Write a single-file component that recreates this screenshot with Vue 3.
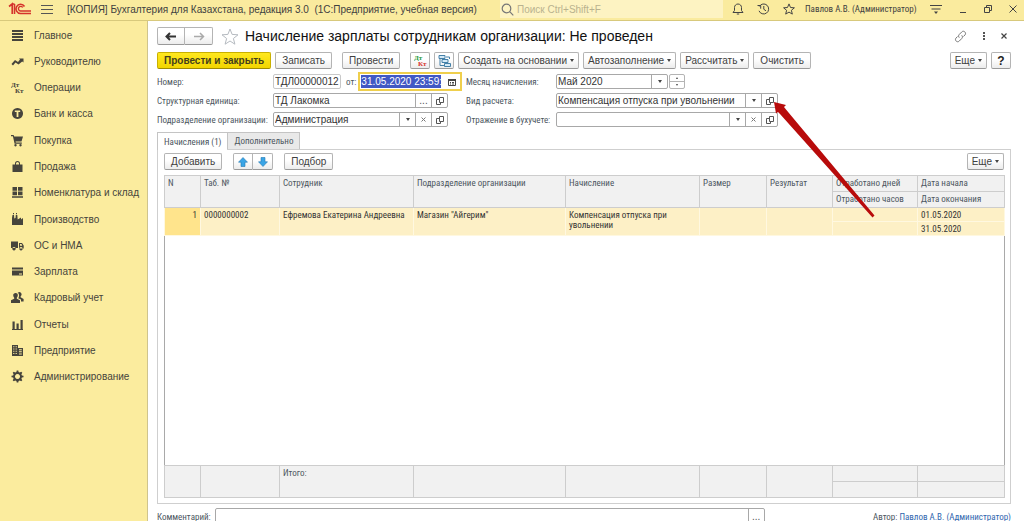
<script setup>
import { ref } from 'vue'

const sections = [
  { name: 'Главное', d: 'M1 1h11v2H1zM1 4h11v2H1zM1 7h11v2H1zM1 10h11v2H1z' },
  { name: 'Руководителю', d: 'M.5 9 4 5l3 2 2-2.500-1-1H12.500v4l-1.300-1L7.500 9.500l-3-2L2 10.500z' },
  { name: 'Операции', dtkt: true },
  { name: 'Банк и касса', d: 'M6.500 1a5.500 5.500 0 1 0 .01 0zM3.800 3.500h5.400v1.600H7.400V10H5.600V5.100H3.800z' },
  { name: 'Покупка', d: 'M0 1h2.600l.6 1.500H12L10.500 7.500H4.600l.2 1h6v1.300H3.600L1.900 2.300H0zM4.500 10a1.200 1.200 0 1 0 .01 0zM9.500 10a1.200 1.200 0 1 0 .01 0z' },
  { name: 'Продажа', d: 'M1.500 4.500H4V3.500a2.500 2.500 0 0 1 5 0V4.500h2.500v7.500h-10zM5 4.500h3V3.500a1.500 1.500 0 0 0-3 0z' },
  { name: 'Номенклатура и склад', d: 'M1.500 1h4.500v3.700H1.500zM7 1h4.500v3.700H7zM1.500 5.500h4.500v3.700H1.500zM7 5.500h4.500v3.700H7zM1 10.200h11v1.600H1z' },
  { name: 'Производство', d: 'M1 12V5l.5-3H3l.3 3.500L4.500 5l.3-3h1.500l.4 4.500L10 4.500v2L12 5v7zM2 0h1v1.300H2zM5 0h1v1.300H5z' },
  { name: 'ОС и НМА', d: 'M0 2.500h7v6.500H0zM8 4h3l1.700 2.500V9.500H8zM9 5v1.800h2.300L10.500 5zM3 8a1.700 1.700 0 1 0 .01 0zM10 8a1.700 1.700 0 1 0 .01 0z' },
  { name: 'Зарплата', d: 'M1 2.500h11v2H1zM1 5.500h11v5H1zM8 8.500v1h3v-1z' },
  { name: 'Кадровый учет', d: 'M4.500 2a2 2 0 0 1 2.300 2.200c0 1.300-.5 2-1 2.500v1L9 9.200V12H0V9.200l3.200-1.500v-1C2.500 6 2.200 5.200 2.200 4.200 2.200 3 3.200 2 4.500 2zM8.200 1c1.400 0 2.400 1 2.400 2.300 0 1-.5 1.800-1 2.200v.8l3 1.700V10.500H10V8.600L7.200 7.200c.8-1 1-2.200.8-3.500-.1-.9-.6-1.500-1.300-2z' },
  { name: 'Отчеты', d: 'M1.500 3.500h2.200V11H1.500zM5.500 5.500h2.200V11H5.500zM9.500 2h2.200v9H9.500zM1 11h11v1H1z' },
  { name: 'Предприятие', d: 'M1 1h6v3h5v8H1zM2.200 2.300v1h1.200v-1zM4.600 2.300v1h1.200v-1zM2.200 4.500v1h1.200v-1zM4.600 4.500v1h1.200v-1zM2.200 6.700v1h1.200v-1zM4.600 6.700v1h1.200v-1zM2.200 8.900v1h1.200v-1zM4.600 8.900v1h1.200v-1zM8 5.200v1h2.800v-1zM8 7.300v1h2.800v-1zM8 9.400v1h2.800v-1z' },
  { name: 'Администрирование', d: 'M5.700.5h1.600l.3 1.600 1.200.5 1.400-.9 1.100 1.100-.9 1.400.5 1.200 1.600.3v1.600l-1.600.3-.5 1.200.9 1.400-1.100 1.100-1.400-.9-1.200.5-.3 1.600H5.700l-.3-1.600-1.200-.5-1.400.9-1.100-1.100.9-1.400-.5-1.200L.5 7.300V5.700l1.600-.3.5-1.200-.9-1.400 1.100-1.100 1.400.9 1.200-.5zM6.500 4a2.500 2.500 0 1 0 .01 0z' },
]

const number = ref('ТДЛ00000012')
const date = ref('31.05.2020 23:59:59')
const month = ref('Май 2020')
const unit = ref('ТД Лакомка')
const department = ref('Администрация')
const kind = ref('Компенсация отпуска при увольнении')
const reflection = ref('')
const comment = ref('')
const search = ref('')

const widths = [36, 79, 134, 152, 134, 67, 66, 85, 87]
const titles = ['N', 'Таб. №', 'Сотрудник', 'Подразделение организации', 'Начисление', 'Размер', 'Результат']
const rows = [
  {
    n: 1,
    cells: ['0000000002', 'Ефремова Екатерина Андреевна', 'Магазин "Айгерим"', 'Компенсация отпуска при увольнении', '', ''],
    start: '01.05.2020',
    end: '31.05.2020',
  },
]
</script>

<template>
  <div class="app">
    <header class="topbar">
      <svg class="logo" viewBox="0 0 24 14" width="24" height="14" fill="none" stroke="#d5332c">
        <path d="M1 4.500 4.200 2v10M6.500 2v10M4.200 2h2.300" stroke-width="1.600" />
        <path d="M16.500 4.500A4.600 4.600 0 1 0 12.500 11.500H23" stroke-width="1.600" />
        <path d="M14.700 5.500A2.300 2.300 0 1 0 12.500 9H23" stroke-width="1.400" />
      </svg>
      <button class="plain" aria-label="Меню">
        <svg viewBox="0 0 12 10" width="12" height="10" stroke="#555" stroke-width="1"><path d="M0 1.500h12M0 5.500h12M0 9.500h12" /></svg>
      </button>
      <span class="app-title">[КОПИЯ] Бухгалтерия для Казахстана, редакция 3.0&nbsp; (1С:Предприятие, учебная версия)</span>
      <label class="search">
        <svg viewBox="0 0 13 13" width="13" height="13" fill="none" stroke="#777" stroke-width="1.200"><circle cx="5.500" cy="5.500" r="4.300" /><path d="m8.700 8.700 3.600 3.600" /></svg>
        <input v-model="search" placeholder="Поиск Ctrl+Shift+F" aria-label="Поиск">
      </label>
      <div class="top-tools">
        <button class="plain" aria-label="Оповещения">
          <svg viewBox="0 0 12 12" width="12" height="12" fill="none" stroke="#444"><path d="M1 9.500h10L9.500 7.500V4.500C9.500 2.500 8 1 6 1S2.500 2.500 2.500 4.500v3zM4.800 11h2.400" /></svg>
        </button>
        <button class="plain" aria-label="История">
          <svg viewBox="0 0 13 12" width="13" height="12" fill="none" stroke="#444"><path d="M2.300 3.500A5 5 0 1 1 2 7.800M6.800 3v3.300L9 7.800" /><path d="M.5 2.500h3.200v3.200" /></svg>
        </button>
        <button class="plain" aria-label="Избранное">
          <svg viewBox="0 0 12 12" width="12" height="12" fill="none" stroke="#444"><path d="m6 .9 1.500 3.600 3.900.3-3 2.500.9 3.800L6 9.100l-3.300 2 .9-3.800-3-2.500 3.900-.3z" /></svg>
        </button>
      </div>
      <span class="user">Павлов А.В. (Администратор)</span>
      <div class="window-tools">
        <button class="plain" aria-label="Настройки">
          <svg viewBox="0 0 12 12" width="12" height="12"><path d="M0 2.500h12M1.500 6h9" stroke="#444" stroke-width="1.200" /><path d="M4 8.500h4L6 11z" fill="#444" /></svg>
        </button>
        <button class="plain" aria-label="Свернуть">
          <svg viewBox="0 0 8 8" width="8" height="8" stroke="#444"><path d="M1 7.500h6" /></svg>
        </button>
        <button class="plain" aria-label="Восстановить">
          <svg viewBox="0 0 8 8" width="8" height="8" fill="none" stroke="#444"><path d="M.5 2.500h5v5h-5zM2.500 2.500v-2h5v5h-2" /></svg>
        </button>
        <button class="plain" aria-label="Закрыть">
          <svg viewBox="0 0 8 8" width="8" height="8" stroke="#444"><path d="m.5.5 7 7M7.500.5l-7 7" /></svg>
        </button>
      </div>
    </header>

    <div class="body">
      <aside class="sidebar">
        <nav>
          <a v-for="s in sections" :key="s.name" href="#">
            <svg viewBox="0 0 13 13" width="13" height="13" fill="#46443c">
              <g v-if="s.dtkt" class="dtkt"><text x="0" y="6">Дт</text><text x="4" y="12">Кт</text></g>
              <path v-else :d="s.d" fill-rule="evenodd" />
            </svg>
            <span>{{ s.name }}</span>
          </a>
        </nav>
      </aside>

      <main class="page">
        <div class="heading">
          <div class="pair nav-pair">
            <button class="btn" aria-label="Назад">
              <svg viewBox="0 0 12 9" width="12" height="9" fill="none" stroke="#333" stroke-width="2"><path d="M1.500 4.500H11M5 1 1.500 4.500 5 8" /></svg>
            </button>
            <button class="btn" aria-label="Вперед">
              <svg viewBox="0 0 12 9" width="12" height="9" fill="none" stroke="#aaa" stroke-width="1.500"><path d="M10.500 4.500H1M7 1l3.500 3.500L7 8" /></svg>
            </button>
          </div>
          <button class="plain star" aria-label="В избранное">
            <svg viewBox="0 0 18 17" width="18" height="17" fill="none" stroke="#b5bac0"><path d="m9 1 2.100 5.400 5.900.4-4.600 3.700 1.500 5.700L9 13l-4.900 3.200 1.500-5.700L1 6.800l5.900-.4z" /></svg>
          </button>
          <h1>Начисление зарплаты сотрудникам организации: Не проведен</h1>
          <div class="form-tools">
            <button class="plain" aria-label="Ссылка">
              <svg viewBox="0 0 13 13" width="13" height="13" fill="none" stroke="#777"><path d="M5.300 7.700c-1-1-1-2.300 0-3.300l2.500-2.500c2-2 5 1 3.200 3L9.500 6.500M7.700 5.300c1 1 1 2.300 0 3.300l-2.500 2.500c-2 2-5-1-3.200-3L3.500 6.500" /></svg>
            </button>
            <button class="plain" aria-label="Действия">
              <svg viewBox="0 0 4 10" width="4" height="10" fill="#555"><path d="M1 1h2v2H1zM1 4h2v2H1zM1 7h2v2H1z" /></svg>
            </button>
            <button class="plain" aria-label="Закрыть форму">
              <svg viewBox="0 0 6 6" width="6" height="6" stroke="#444" stroke-width="1.200"><path d="m.5.5 5 5M5.500.5l-5 5" /></svg>
            </button>
          </div>
        </div>

        <div class="toolbar commands">
          <button class="btn primary">Провести и закрыть</button>
          <button class="btn">Записать</button>
          <button class="btn apart">Провести</button>
          <button class="btn icon apart" aria-label="Дт/Кт">
            <svg class="dtkt color" viewBox="0 0 13 13" width="13" height="13"><text x="0" y="6" fill="#1c9a3c">Дт</text><text x="4" y="12" fill="#d8322c">Кт</text></svg>
          </button>
          <button class="btn icon" aria-label="Структура подчиненности">
            <svg viewBox="0 0 13 12" width="13" height="12" fill="#d4e9f6" stroke="#4480a8"><path d="M1 .5h6v3H1zM4 4.500h6v3H4zM6.500 8.500h6v3h-6z" /><path d="M2 4v6.500h4M8 2h3.500v2" fill="none" /></svg>
          </button>
          <button class="btn menu">Создать на основании<i class="caret" /></button>
          <button class="btn menu">Автозаполнение<i class="caret" /></button>
          <button class="btn menu">Рассчитать<i class="caret" /></button>
          <button class="btn">Очистить</button>
          <button class="btn menu to-end">Еще<i class="caret" /></button>
          <button class="btn help">?</button>
        </div>

        <form class="fields" @submit.prevent>
          <label for="number">Номер:</label>
          <div class="line">
            <div class="box number"><input id="number" v-model="number"></div>
            <label for="date">от:</label>
            <div class="box date">
              <input id="date" v-model="date">
              <button type="button" class="plain" aria-label="Календарь">
                <svg viewBox="0 0 8 8" width="8" height="8"><path d="M.5 1.500h7v6h-7z" fill="none" stroke="#444" /><path d="M0 1h8v2H0zM2 4h1v1H2zM4 4h2v1H4zM2 5.500h1v1H2zM4 5.500h2v1H4z" fill="#444" /></svg>
              </button>
            </div>
          </div>
          <label for="month">Месяц начисления:</label>
          <div class="line">
            <div class="box month">
              <input id="month" v-model="month">
              <button type="button" class="cell" aria-label="Выбрать месяц"><i class="caret" /></button>
            </div>
            <div class="spinner">
              <button type="button" aria-label="Следующий месяц"><i class="caret up" /></button>
              <button type="button" aria-label="Предыдущий месяц"><i class="caret" /></button>
            </div>
          </div>

          <label for="unit">Структурная единица:</label>
          <div class="box left">
            <input id="unit" v-model="unit">
            <button type="button" class="cell" aria-label="Выбрать">...</button>
            <button type="button" class="cell" aria-label="Открыть"><svg class="open" viewBox="0 0 8 8"><path d="M3.500.5h4v5h-4zM3.500 2.500h-3v5h4v-2" /></svg></button>
          </div>
          <label for="kind">Вид расчета:</label>
          <div class="box right">
            <input id="kind" v-model="kind">
            <button type="button" class="cell" aria-label="Список"><i class="caret" /></button>
            <button type="button" class="cell" aria-label="Открыть"><svg class="open" viewBox="0 0 8 8"><path d="M3.500.5h4v5h-4zM3.500 2.500h-3v5h4v-2" /></svg></button>
            <svg class="pointer" viewBox="0 0 102 118" width="102" height="118" fill="#b80b0b"><path d="M0 0 12 3 10 5 12 7.500 100.500 113.500 98.500 115.500 6 12 4 10 2 11.500z" /></svg>
          </div>

          <label for="department">Подразделение организации:</label>
          <div class="box left">
            <input id="department" v-model="department">
            <button type="button" class="cell" aria-label="Список"><i class="caret" /></button>
            <button type="button" class="cell" aria-label="Очистить поле"><svg class="clear" viewBox="0 0 5 5"><path d="m.5.5 4 4M4.500.5l-4 4" /></svg></button>
            <button type="button" class="cell" aria-label="Открыть"><svg class="open" viewBox="0 0 8 8"><path d="M3.500.5h4v5h-4zM3.500 2.500h-3v5h4v-2" /></svg></button>
          </div>
          <label for="reflection">Отражение в бухучете:</label>
          <div class="box right">
            <input id="reflection" v-model="reflection">
            <button type="button" class="cell" aria-label="Список"><i class="caret" /></button>
            <button type="button" class="cell" aria-label="Очистить поле"><svg class="clear" viewBox="0 0 5 5"><path d="m.5.5 4 4M4.500.5l-4 4" /></svg></button>
            <button type="button" class="cell" aria-label="Открыть"><svg class="open" viewBox="0 0 8 8"><path d="M3.500.5h4v5h-4zM3.500 2.500h-3v5h4v-2" /></svg></button>
          </div>
        </form>

        <div class="tabs" role="tablist">
          <button role="tab" class="tab active" aria-selected="true">Начисления (1)</button>
          <button role="tab" class="tab" aria-selected="false">Дополнительно</button>
        </div>

        <section class="panel">
          <div class="toolbar">
            <button class="btn">Добавить</button>
            <div class="pair apart">
              <button class="btn" aria-label="Вверх"><svg viewBox="0 0 10 10" width="10" height="10" fill="#3aa5e6" stroke="#2378b4" stroke-width=".6"><path d="m5 .5 4.500 4.700H7v4.300H3V5.200H.5z" /></svg></button>
              <button class="btn" aria-label="Вниз"><svg viewBox="0 0 10 10" width="10" height="10" fill="#3aa5e6" stroke="#2378b4" stroke-width=".6"><path d="M5 9.500.5 4.800H3V.5h4v4.300h2.500z" /></svg></button>
            </div>
            <button class="btn apart">Подбор</button>
            <button class="btn menu to-end">Еще<i class="caret" /></button>
          </div>
          <div class="table-wrap">
            <table>
              <colgroup><col v-for="(w, i) in widths" :key="i" :style="{ width: w + 'px' }"></colgroup>
              <thead>
                <tr>
                  <th v-for="t in titles" :key="t" rowspan="2">{{ t }}</th>
                  <th>Отработано дней</th>
                  <th>Дата начала</th>
                </tr>
                <tr><th>Отработано часов</th><th>Дата окончания</th></tr>
              </thead>
              <tbody>
                <template v-for="r in rows" :key="r.n">
                  <tr class="record">
                    <td rowspan="2" class="num">{{ r.n }}</td>
                    <td v-for="(c, i) in r.cells" :key="i" rowspan="2">{{ c }}</td>
                    <td />
                    <td>{{ r.start }}</td>
                  </tr>
                  <tr class="record"><td /><td>{{ r.end }}</td></tr>
                </template>
                <tr class="rest"><td colspan="9" /></tr>
              </tbody>
              <tfoot>
                <tr>
                  <td rowspan="2" /><td rowspan="2" /><td rowspan="2">Итого:</td>
                  <td v-for="i in 4" :key="i" rowspan="2" />
                  <td /><td />
                </tr>
                <tr><td /><td /></tr>
              </tfoot>
            </table>
          </div>
        </section>

        <footer class="bottom">
          <label for="comment">Комментарий:</label>
          <div class="box comment">
            <input id="comment" v-model="comment">
            <button type="button" class="cell" aria-label="Изменить комментарий">...</button>
          </div>
          <span class="author">Автор: <a href="#">Павлов А.В. (Администратор)</a></span>
        </footer>
      </main>
    </div>
  </div>
</template>

<style>
body { margin: 0; overflow: hidden; }
</style>

<style scoped>
.app, .app * { box-sizing: border-box; }
.app {
  --small: 9px "Roboto Condensed", Roboto, "Liberation Sans", sans-serif;
  --normal: 10px "Liberation Sans", Arial, sans-serif;
  height: 100vh;
  display: flex;
  flex-direction: column;
  overflow: hidden;
  background: #fff;
  color: #404040;
  font: var(--normal);
}
button, input { font: inherit; color: inherit; margin: 0; padding: 0; border: 0; background: none; outline: 0; min-width: 0; }
svg { display: block; flex: none; }
.plain { display: flex; align-items: center; justify-content: center; }

.topbar {
  flex: 0 0 21px;
  display: flex;
  align-items: center;
  padding: 0 7px 2px 8px;
  background: #faeb9e;
  border-bottom: 1px solid #d8c97c;
}
.logo { margin-right: 9px; }
.app-title { margin-left: 14px; white-space: nowrap; }
.search {
  display: flex;
  align-items: center;
  gap: 3px;
  margin-left: auto;
  flex: 0 0 223px;
  height: 18px;
  padding-left: 1px;
  background: #fdf3c2;
}
.search input { flex: 1; font: var(--normal); }
.search input::placeholder { color: #b9b28f; opacity: 1; }
.top-tools { display: flex; gap: 13px; margin-left: 9px; }
.user { font: var(--small); min-width: 115px; margin-left: 10px; white-space: nowrap; }
.window-tools { display: flex; align-items: center; gap: 17px; margin-left: 10px; }

.body { flex: 1; min-height: 0; display: flex; }
.sidebar { flex: 0 0 148px; background: #fbec9e; border-right: 1px solid #cfc48d; padding-top: 1px; }
.sidebar nav { display: grid; grid-auto-rows: 1fr; height: 368px; }
.sidebar a { display: flex; align-items: center; gap: 10px; padding-left: 11px; color: #46443c; text-decoration: none; white-space: nowrap; }
.dtkt { font: bold 7px "Liberation Serif", serif; }

.page {
  flex: 1;
  min-width: 0;
  height: calc(100% + 4px);
  display: flex;
  flex-direction: column;
  padding: 6px 13px 0 9px;
}
.heading { display: flex; align-items: center; height: 18px; margin-bottom: 7px; }
h1 { margin: 0 0 0 6px; font: 14px "Liberation Sans", Arial, sans-serif; color: #111; white-space: nowrap; }
.star { margin-left: 8px; }
.form-tools { display: flex; align-items: center; gap: 15px; margin-left: auto; padding-right: 4px; }

.btn {
  display: flex;
  align-items: center;
  justify-content: center;
  height: 17px;
  padding: 0 6px;
  border: 1px solid #b4b4b4;
  border-bottom-color: #999;
  border-radius: 2px;
  background: linear-gradient(#fff 40%, #ececec);
  white-space: nowrap;
}
.btn.menu { padding: 0 4px; }
.pair { display: flex; }
.pair .btn { width: 20px; padding: 0; }
.pair .btn:first-child { border-radius: 2px 0 0 2px; }
.pair .btn:last-child { border-left: 0; border-radius: 0 2px 2px 0; }
.nav-pair .btn { width: 28px; height: 18px; }
.toolbar { display: flex; gap: 5px; }
.commands { gap: 4px; }
.apart { margin-left: 6px; }
.to-end { margin-left: auto; }
.primary { font-weight: bold; background: linear-gradient(#ffe81f, #f2d500); border-color: #c9b000; border-bottom-color: #a08c00; color: #443f1c; }
.icon { width: 20px; padding: 0; }
.help { width: 20px; padding: 0; font-weight: bold; font-size: 12px; color: #222; }
.caret { width: 0; height: 0; border: 2px solid transparent; border-top: 3px solid #444; border-bottom: 0; }
.caret.up { border-top: 0; border-bottom: 2px solid #444; }
.btn .caret { margin-left: 3px; }

.fields {
  display: grid;
  grid-template-columns: 116px 193px 90px 1fr;
  grid-auto-rows: 15px;
  row-gap: 4px;
  align-items: center;
  margin-top: 5px;
}
label, .author { font: var(--small); color: #4c5660; white-space: nowrap; }
.line { display: flex; align-items: center; }
.line label { margin: 0 2px 0 5px; }
.box { display: flex; align-items: stretch; height: 15px; border: 1px solid #a8a8a8; border-radius: 2px; background: #fff; color: #333; }
.box input { flex: 1; padding: 0 1px; }
.number { width: 68px; border-color: #c8c8c8; }
.date { width: 104px; height: 19px; border: 2px solid #efcf4d; border-radius: 0; padding: 1px; }
.date input { margin-right: 4px; background: #4158c4; color: #fff; padding: 0; }
.date button { width: 14px; }
.month { width: 112px; }
.left { width: 175px; }
.right { width: 222px; position: relative; }
.cell { flex: 0 0 16px; display: flex; align-items: center; justify-content: center; border-left: 1px solid #a8a8a8; color: #555; }
.open { width: 8px; height: 8px; fill: none; stroke: #555; }
.clear { width: 5px; height: 5px; stroke: #777; }
.spinner { display: flex; flex-direction: column; width: 16px; height: 15px; margin-left: 1px; border: 1px solid #b4b4b4; border-radius: 2px; }
.spinner button { flex: 1; display: flex; align-items: center; justify-content: center; }
.spinner button + button { border-top: 1px solid #b4b4b4; }
.spinner .caret { border-width: 2px 1px 0; }
.spinner .caret.up { border-width: 0 1px 2px; }
.pointer { position: absolute; left: 217px; top: 8px; z-index: 2; }

.tabs { display: flex; margin-top: 5px; }
.tab { height: 17px; padding: 0 6px; border: 1px solid #c4c4c4; border-bottom: 0; background: #e9e9e9; font: var(--small); color: #4c5660; }
.tab.active { background: #fff; height: 18px; margin-bottom: -1px; border-right: 0; z-index: 1; }
.panel { flex: 1; min-height: 0; display: flex; flex-direction: column; padding: 3px 6px 5px; border: 1px solid #cfcfcf; }
.table-wrap { flex: 1; min-height: 0; margin-top: 5px; }
table { width: 100%; height: 100%; table-layout: fixed; border-collapse: collapse; border: 1px solid #a9a9a9; font: var(--small); line-height: 10px; }
th, td { padding: 2px 3px; text-align: left; vertical-align: top; font-weight: normal; }
th, tfoot td { height: 16px; background: #f1f1f1; border: 1px solid #cdcdcd; color: #4c5660; }
.record td { height: 14px; padding-bottom: 1px; background: #fdf0c6; border: 1px solid #fff8e0; color: #333; }
.record .num { background: #ffe48c; text-align: right; }
.rest td { height: auto; }

.bottom { display: flex; align-items: center; margin-top: 4px; }
.comment { flex: 0 1 550px; margin-left: 4px; height: 17px; }
.author { margin-left: auto; }
.author a { color: #2f66ae; text-decoration: underline; text-underline-offset: 1px; }
</style>
